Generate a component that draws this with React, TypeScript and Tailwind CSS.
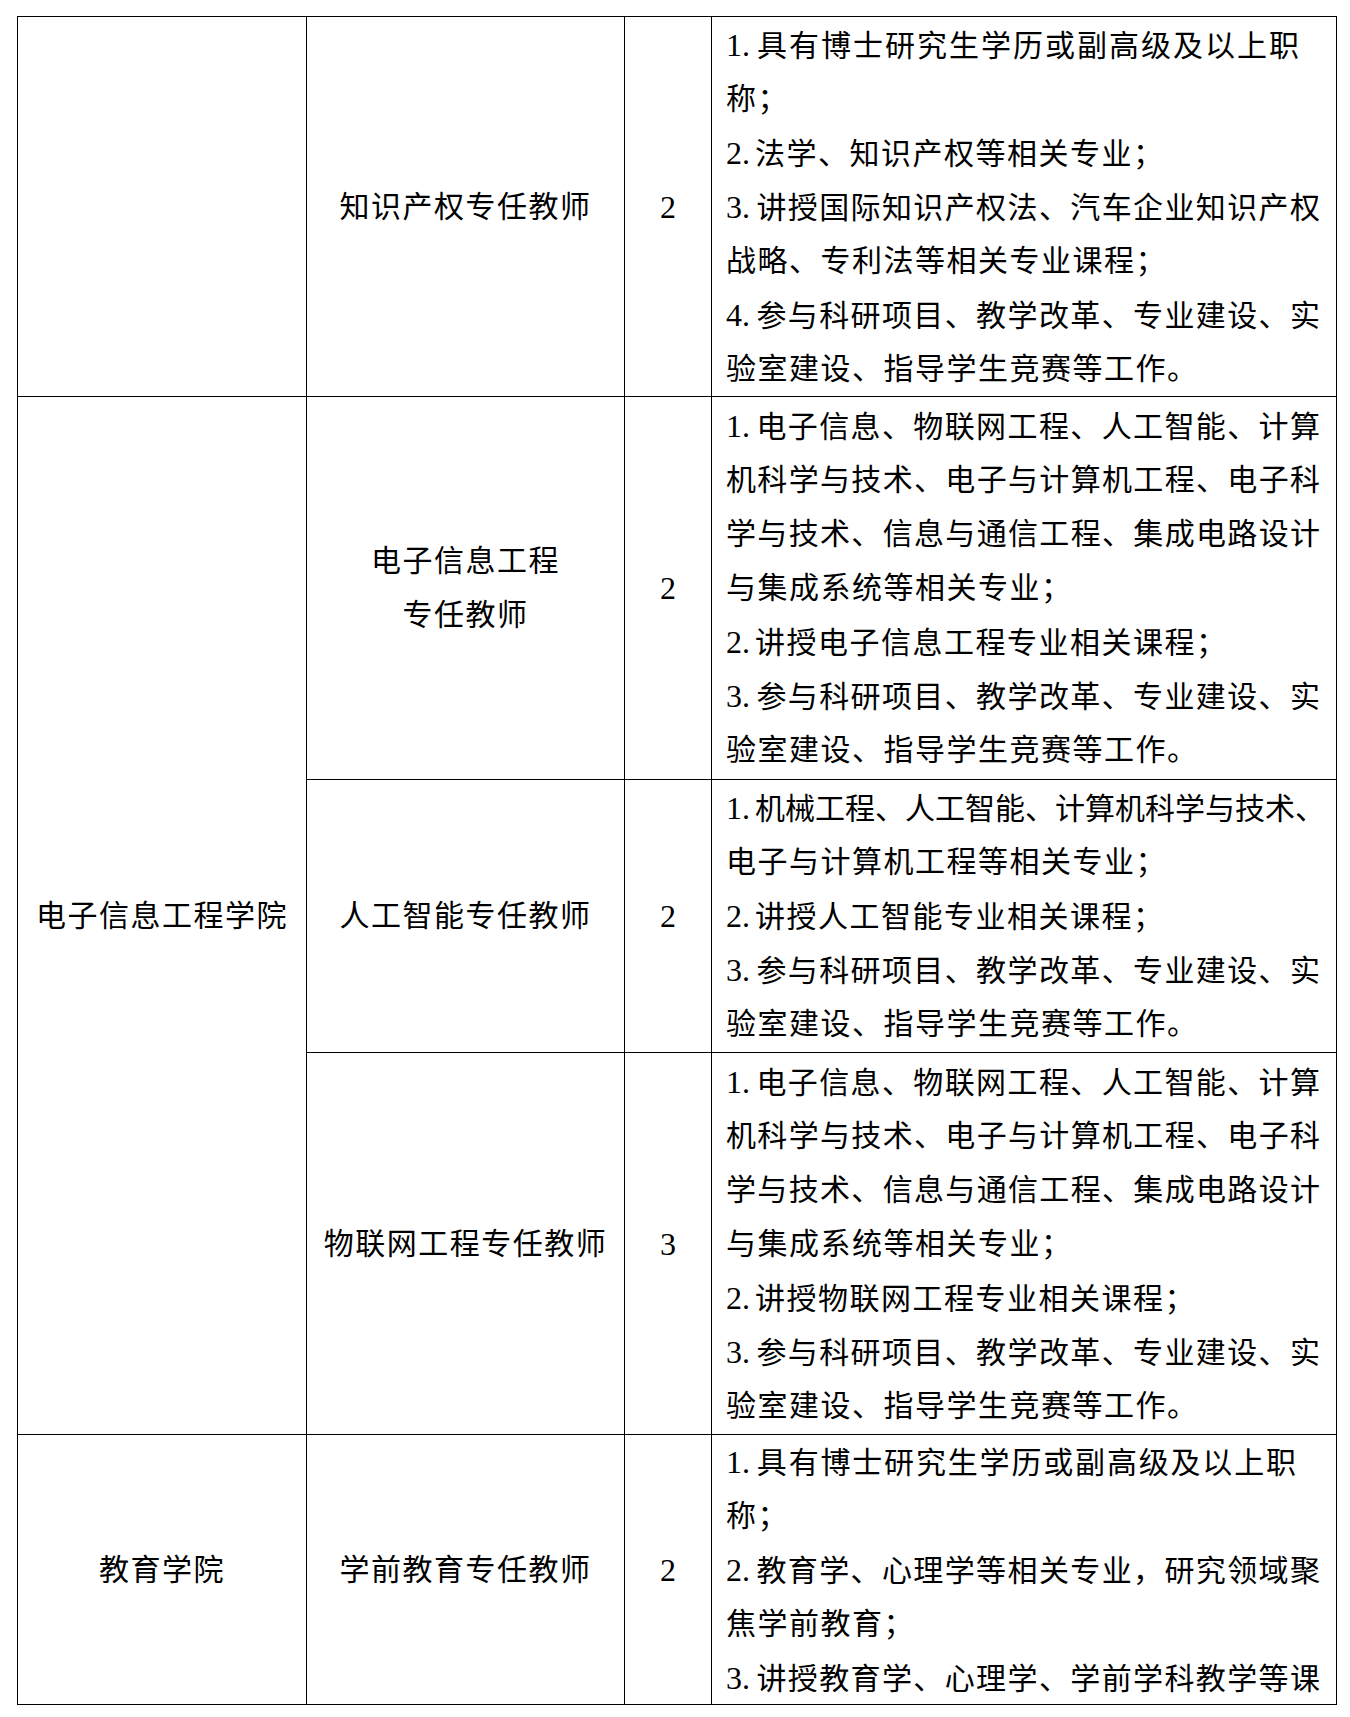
type Line = { t: string; j?: boolean; cls?: string };

type Row = {
  h: string;
  post: string[];
  num: string;
  lines: Line[];
};

const RAISE: Line[] = [
  { t: "1.电子信息、物联网工程、人工智能、计算", j: true },
  { t: "机科学与技术、电子与计算机工程、电子科", j: true },
  { t: "学与技术、信息与通信工程、集成电路设计", j: true },
  { t: "与集成系统等相关专业；" },
];

const WORK: Line[] = [
  { t: "3.参与科研项目、教学改革、专业建设、实", j: true },
  { t: "验室建设、指导学生竞赛等工作。" },
];

const rows: Row[] = [
  {
    h: "h-[380px]",
    post: ["知识产权专任教师"],
    num: "2",
    lines: [
      { t: "1.具有博士研究生学历或副高级及以上职", j: true, cls: "pr-[21px]" },
      { t: "称；" },
      { t: "2.法学、知识产权等相关专业；" },
      { t: "3.讲授国际知识产权法、汽车企业知识产权", j: true },
      { t: "战略、专利法等相关专业课程；" },
      { t: "4.参与科研项目、教学改革、专业建设、实", j: true },
      { t: "验室建设、指导学生竞赛等工作。" },
    ],
  },
  {
    h: "h-[383px]",
    post: ["电子信息工程", "专任教师"],
    num: "2",
    lines: [...RAISE, { t: "2.讲授电子信息工程专业相关课程；" }, ...WORK],
  },
  {
    h: "h-[273px]",
    post: ["人工智能专任教师"],
    num: "2",
    lines: [
      { t: "1.机械工程、人工智能、计算机科学与技术、", j: true },
      { t: "电子与计算机工程等相关专业；" },
      { t: "2.讲授人工智能专业相关课程；" },
      ...WORK,
    ],
  },
  {
    h: "h-[382px]",
    post: ["物联网工程专任教师"],
    num: "3",
    lines: [...RAISE, { t: "2.讲授物联网工程专业相关课程；" }, ...WORK],
  },
  {
    h: "h-[270px]",
    post: ["学前教育专任教师"],
    num: "2",
    lines: [
      { t: "1.具有博士研究生学历或副高级及以上职", j: true, cls: "pr-[24px]" },
      { t: "称；" },
      { t: "2.教育学、心理学等相关专业，研究领域聚", j: true },
      { t: "焦学前教育；" },
      { t: "3.讲授教育学、心理学、学前学科教学等课", j: true },
    ],
  },
];

// split "3.xxx" into the numbered prefix and the rest
function Text({ t }: { t: string }) {
  const m = t.match(/^(\d\.)(.*)$/);
  if (!m) return <>{t}</>;
  return (
    <>
      <span className="mr-[5px] text-[32px] tracking-normal">{m[1]}</span>
      {m[2]}
    </>
  );
}

function Centered({ lines, big }: { lines: string[]; big?: boolean }) {
  return (
    <div className="flex h-full flex-col items-center justify-center">
      {lines.map((l, i) => (
        <div
          key={i}
          className={
            big
              ? "h-[54px] whitespace-nowrap text-[32px] leading-[54px]"
              : "h-[54px] whitespace-nowrap leading-[54px] tracking-[1.5px]"
          }
        >
          {l}
        </div>
      ))}
    </div>
  );
}

function Duties({ lines }: { lines: Line[] }) {
  return (
    <div className="flex h-full flex-col justify-center pl-[14px] pr-[16px]">
      {lines.map((l, i) => (
        <div
          key={i}
          className={
            l.j
              ? `h-[54px] whitespace-nowrap leading-[54px] text-justify [text-align-last:justify] ${l.cls ?? ""}`
              : "h-[54px] whitespace-nowrap leading-[54px] tracking-[1.5px]"
          }
        >
          <Text t={l.t} />
        </div>
      ))}
    </div>
  );
}

export default function App() {
  const cell = "border-b border-r border-black";
  return (
    <div className="min-h-[1717px] bg-white pl-[17px] pt-[16px] font-['Liberation_Serif','Noto_Sans_CJK_SC',serif] text-[30px] text-black">
      <div className="grid w-[1320px] grid-cols-[289px_318px_87px_625px] border-l border-t border-black">
        {rows.map((r, i) => (
          <div key={i} className="contents">
            {i === 0 && <div className={`${cell} ${r.h}`} />}
            {i === 1 && (
              <div className={`${cell} row-span-3`}>
                <Centered lines={["电子信息工程学院"]} />
              </div>
            )}
            {i === 4 && (
              <div className={`${cell} ${r.h}`}>
                <Centered lines={["教育学院"]} />
              </div>
            )}
            <div className={`${cell} ${r.h}`}>
              <Centered lines={r.post} />
            </div>
            <div className={`${cell} ${r.h}`}>
              <Centered lines={[r.num]} big />
            </div>
            <div className={`${cell} ${r.h}`}>
              <Duties lines={r.lines} />
            </div>
          </div>
        ))}
      </div>
    </div>
  );
}
